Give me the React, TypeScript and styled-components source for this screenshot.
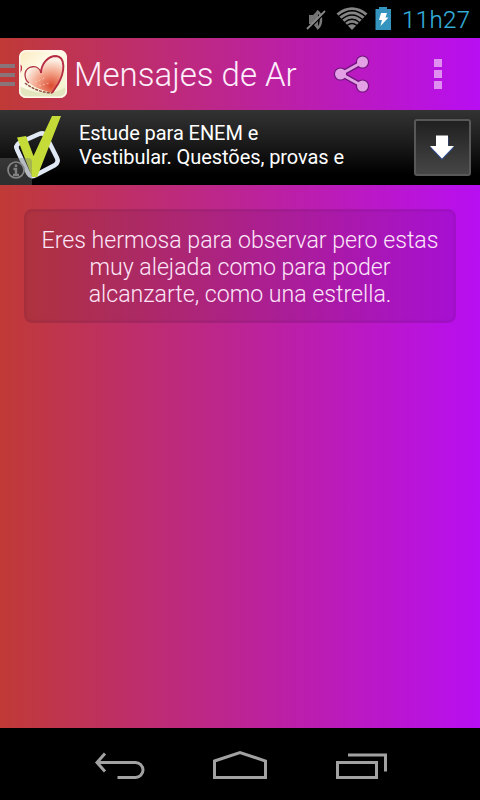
import React from "react";
import styled, { createGlobalStyle } from "styled-components";

const GlobalStyle = createGlobalStyle`
  * { box-sizing: border-box; }
  body { margin: 0; background: #000; font-family: Roboto, sans-serif; }
  svg { display: block; flex: none; }
`;

const Screen = styled.div`
  width: 480px;
  height: 800px;
  display: flex;
  flex-direction: column;
  overflow: hidden;
  background: linear-gradient(90deg, #c03a36 0%, #bc2494 50%, #b80ef2 100%);
`;

const StatusBar = styled.header`
  height: 38px;
  flex: none;
  display: flex;
  align-items: center;
  background: #000;
  padding-left: 306px;
`;

const Clock = styled.span`
  margin-left: 10px;
  padding-top: 3px;
  font-size: 24px;
  font-weight: 300;
  line-height: 35px;
  letter-spacing: 0.4px;
  color: #35b0dc;
  -webkit-text-stroke: 0.2px #35b0dc;
`;

const ActionBar = styled.div`
  height: 72px;
  flex: none;
  display: flex;
  align-items: center;
`;

const DrawerHandle = styled.div`
  width: 15px;
  height: 22px;
  margin: 2px 4px 0 0;
  display: flex;
  flex-direction: column;
  justify-content: space-between;
`;

const HandleLine = styled.span`
  height: 4px;
  background: #89747a;
`;

const Title = styled.h1`
  margin: 0 0 0 7px;
  width: 259px;
  font-size: 33px;
  font-weight: 300;
  line-height: 70px;
  padding-top: 2px;
  white-space: nowrap;
  color: #fdeefb;
`;

const Overflow = styled.div`
  display: flex;
  flex-direction: column;
  gap: 3px;
  margin-left: 63px;
`;

const OverflowDot = styled.span`
  width: 8px;
  height: 8px;
  background: #e08ff0;
`;

const Ad = styled.section`
  height: 75px;
  flex: none;
  display: flex;
  background: linear-gradient(#333 0%, #1c1c1c 42%, #000 86%, #000 100%);
`;

const AdText = styled.p`
  margin: 11px 0 0 11px;
  width: 335px;
  font-size: 20px;
  line-height: 24px;
  letter-spacing: -0.07px;
  color: #fff;
  white-space: pre-line;
`;

const Download = styled.div`
  width: 57px;
  height: 57px;
  margin-top: 9px;
  display: flex;
  align-items: center;
  justify-content: center;
  border: 2px solid #585858;
  border-radius: 3px;
  background: linear-gradient(#202020, #464646);
`;

const Content = styled.main`
  flex: 1;
  padding: 24px;
`;

const Message = styled.p`
  margin: 0;
  height: 114px;
  padding: 17px 4px 0;
  border: 1px solid rgba(60, 20, 60, 0.06);
  border-radius: 8px;
  background: rgba(50, 20, 50, 0.12);
  box-shadow: inset 0 0 2px 1px rgba(50, 20, 50, 0.1);
  font-size: 23.15px;
  font-weight: 300;
  line-height: 27px;
  text-align: center;
  white-space: pre-line;
  color: #fde6f8;
`;

const NavBar = styled.nav`
  height: 72px;
  flex: none;
  background: #000;
  display: flex;
  align-items: center;
  padding: 2px 0 0 94px;
  gap: 66px;
`;

const StatusIcons = () => (
  <svg width="86" height="38" viewBox="306 0 86 38">
    <path d="M309 15h4l5-5v20l-5-6h-4z" fill="#737373" />
    <path d="M317 11q4.500 3 4 9.500t-4 8" fill="none" stroke="#7a7a7a" strokeWidth="2.500" />
    <path d="M308 30L326 12" stroke="#000" strokeWidth="1.500" />
    <path d="M307 29L325 11" stroke="#888" strokeWidth="1.800" />
    <path d="M336.500 13.500Q352 1 367.500 13.500L352 30z" fill="#858585" />
    <g fill="none" stroke="#000" strokeWidth="1.300">
      <path d="M338.500 16.500Q352 5 365.500 16.500" />
      <path d="M341.500 19.500Q352 10.500 362.500 19.500" />
      <path d="M344.500 22.500Q352 16 359.500 22.500" />
      <path d="M347 25.500Q352 21.500 357 25.500" />
    </g>
    <path d="M379 7h8v2h4v21h-15.500V9h3.500z" fill="#3494be" />
    <path d="M381 13h6l-1.500 4.500h3L380.500 26l1.500-6h-3z" fill="#fff" />
  </svg>
);

const AppIcon = () => (
  <svg width="48" height="48" viewBox="0 0 48 48">
    <defs>
      <linearGradient id="paper" x1="0" y1="0" x2="1" y2="1">
        <stop offset="0" stopColor="#fae9bb" />
        <stop offset=".4" stopColor="#fffbea" />
        <stop offset="1" stopColor="#f0efc8" />
      </linearGradient>
      <radialGradient id="heart" cx=".68" cy=".8" r=".72">
        <stop offset="0" stopColor="#dc4b31" />
        <stop offset=".5" stopColor="#f2a086" />
        <stop offset="1" stopColor="#fdf0e4" />
      </radialGradient>
      <clipPath id="iconClip"><rect width="48" height="48" rx="7" /></clipPath>
    </defs>
    <g clipPath="url(#iconClip)">
      <rect width="48" height="48" fill="url(#paper)" />
      <path d="M0 36Q12 42 25 43T48 36V48H0z" fill="#e2e5bd" />
      <path d="M22 23C20 14 6 15 6 24C6 32 14 38 33 43C39 34 46 24 44 13C42 3 25 5 22 23z" fill="url(#heart)" />
      <path d="M22 23C20 14 7 15 6 24C6 29 7 31 10 33" fill="none" stroke="#ad3541" strokeWidth="1.300" />
      <path d="M22 23C22 14 29 6 37 6C47 7 46 22 39 34L33 43" fill="none" stroke="#b52c43" strokeWidth="1.900" />
      <path d="M6 33Q17 42 33 43" fill="none" stroke="#8f4f40" strokeWidth="1.500" strokeDasharray="3 1" />
      <path d="M0 15q3 0 2 5l-3 5" fill="none" stroke="#c22e45" strokeWidth="1.700" />
      <path d="M16 32l10-4M20 36l10-3" stroke="#fce5ce" strokeWidth="1" strokeDasharray="2 2" opacity=".6" />
      <rect x=".75" y=".75" width="46.500" height="46.500" rx="6.500" fill="none" stroke="#fff7ed" strokeWidth="1.500" />
    </g>
  </svg>
);

const ShareIcon = () => (
  <svg width="38" height="40" viewBox="333 54 38 40">
    <g stroke="#6d1579" fill="#6d1579">
      <path d="M362.500 62L341 74l21.500 12" fill="none" strokeWidth="5.500" />
      <circle cx="362.500" cy="62" r="6.600" stroke="none" />
      <circle cx="340.500" cy="74" r="6.600" stroke="none" />
      <circle cx="362.500" cy="86" r="6.600" stroke="none" />
    </g>
    <g stroke="#e3a0e5" fill="#e3a0e5">
      <path d="M362.500 62L341 74l21.500 12" fill="none" strokeWidth="3" />
      <circle cx="362.500" cy="62" r="5.500" stroke="none" />
      <circle cx="340.500" cy="74" r="5.500" stroke="none" />
      <circle cx="362.500" cy="86" r="5.500" stroke="none" />
    </g>
  </svg>
);

const AdLogo = () => (
  <svg width="68" height="75" viewBox="0 110 68 75">
    <path d="M17 149.500Q15 146 19 143L39 134Q44 132 46 136L57 158Q59 162 55 165L36 175Q31 178 28 173z" fill="none" stroke="#e0e8f3" strokeWidth="4.500" />
    <path d="M17 137.500L26 136l7.500 20L52 116h9L37 177h-5z" fill="#c5dc38" />
    <path d="M0 158h28q4 0 4 4v23H0z" fill="#777" opacity=".4" />
    <circle cx="16" cy="170" r="8" fill="none" stroke="#858585" strokeWidth="1.700" />
    <path d="M16 164.500v2.500M13.500 169H16v6M13 175h6" fill="none" stroke="#808080" strokeWidth="2.400" />
  </svg>
);

export default function App() {
  return (
    <Screen>
      <GlobalStyle />
      <StatusBar>
        <StatusIcons />
        <Clock>11h27</Clock>
      </StatusBar>
      <ActionBar>
        <DrawerHandle><HandleLine /><HandleLine /><HandleLine /></DrawerHandle>
        <AppIcon />
        <Title>Mensajes de Ar</Title>
        <ShareIcon />
        <Overflow><OverflowDot /><OverflowDot /><OverflowDot /></Overflow>
      </ActionBar>
      <Ad>
        <AdLogo />
        <AdText>{"Estude para ENEM e\nVestibular. Questões, provas e"}</AdText>
        <Download>
          <svg width="27" height="27" viewBox="0 0 27 27">
            <path d="M7.500 3h12v10.500H25L13 26 1 13.500h6.500z" fill="#304e91" />
            <path d="M7 1.500h12V12h6L13 24.500 1 12h6z" fill="#fff" />
          </svg>
        </Download>
      </Ad>
      <Content>
        <Message>{"Eres hermosa para observar pero estas\nmuy alejada como para poder\nalcanzarte, como una estrella."}</Message>
      </Content>
      <NavBar>
        <svg width="52" height="30" viewBox="94 750 52 30" fill="none" stroke="#a2a2a2" strokeWidth="3">
          <path d="M105 753.500l-8 9 8 9M97 762.500h38.500a7.500 7.500 0 0 1 0 15H117.500" />
        </svg>
        <svg width="56" height="30" viewBox="212 750 56 30" fill="none" stroke="#a2a2a2" strokeWidth="3">
          <path d="M214.500 761L240 752.500l25.500 8.500v16.500h-51z" />
        </svg>
        <svg width="54" height="30" viewBox="334 750 54 30" fill="none" stroke="#a2a2a2" strokeWidth="3">
          <path d="M337.500 762.500h39v15h-39zM348 755h37.500v16.500" />
        </svg>
      </NavBar>
    </Screen>
  );
}
